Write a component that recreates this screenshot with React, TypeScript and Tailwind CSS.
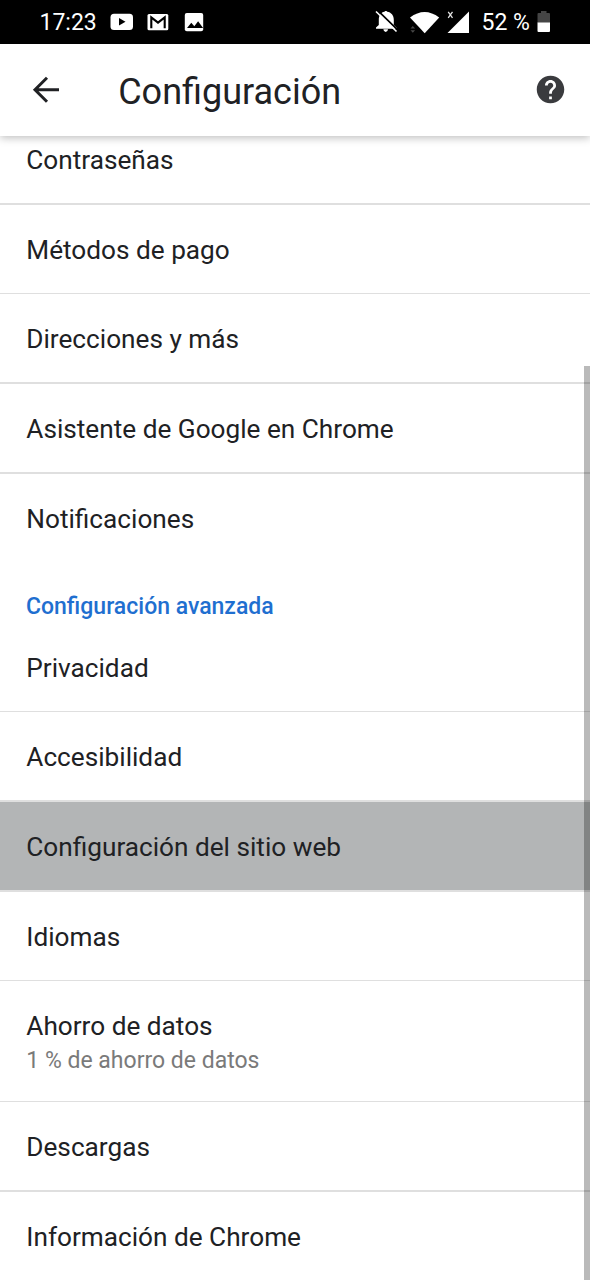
import React from "react";

type RowProps = {
  label: string;
  detail?: string;
  pressed?: boolean;
  divider?: boolean;
  height?: string;
};

function Row({ label, detail, pressed, divider = true, height = "h-[89.7px]" }: RowProps) {
  return (
    <li className={`flex shrink-0 flex-col ${height}`}>
      <div
        className={`flex flex-1 flex-col justify-center pl-[26.3px] ${detail ? "pt-[5px]" : "pt-[3px]"} ${pressed ? "bg-[#b3b5b6]" : ""}`}
      >
        <span className="text-[26.2px] leading-[31px] text-[#202124]">{label}</span>
        {detail && (
          <span className="pt-[4px] text-[23px] leading-[30px] text-[#7a7a7a]">{detail}</span>
        )}
      </div>
      <div className={`h-[1.65px] ${divider ? "bg-[#dfdfdf]" : ""}`} />
    </li>
  );
}

function StatusBar() {
  return (
    <div className="flex h-11 shrink-0 items-center bg-black text-[23px] text-white">
      <span className="ml-[39.5px] w-[70.5px] pt-[2px] leading-[44px]">17:23</span>
      <svg className="h-[44px] w-[100px]" viewBox="110 0 100 44" fill="#fff">
        <rect x="110.5" y="13.8" width="22.5" height="16.2" rx="3.5" />
        <path d="M119 18v7.6l6.5-3.8z" fill="#000" />
        <rect x="147.5" y="14" width="20.8" height="16.2" rx="1.5" />
        <path d="M151.3 28.2V17.5l6.7 5.2 6.7-5.2v10.7" fill="none" stroke="#000" strokeWidth="2.1" />
        <rect x="184.8" y="13" width="18.4" height="18.3" rx="2" />
        <path d="M187 28l4.3-5.3 3 3.5 3.8-5 5 6.8z" fill="#000" />
      </svg>
      <svg className="ml-[150px] h-[44px] w-[120px]" viewBox="360 0 120 44" fill="#fff">
        <path d="M378.800 20C378.800 15.500 381 12.300 384.500 11.800C384.500 10.800 387.200 10.800 387.200 11.800C391.200 12.300 393.800 15.500 393.800 20V25L396.500 27.500V28.700H376V27.500L378.800 25Z" />
        <path d="M383.300 29.300h4.800q-.5 2.700-2.400 2.700t-2.400-2.700z" />
        <path d="M377.600 10.300l20 19.600" stroke="#000" strokeWidth="1.800" />
        <path d="M376 11.500l20.500 20" stroke="#fff" strokeWidth="1.600" />
        <path d="M410 17.500q14.600-11 29.200 0L424.700 33.300z" />
        <path d="M410.500 28.500l2.300-2.500 2.300 2.500zM410.500 30.300l2.300 2.500 2.300-2.500z" fill="#484848" />
        <path d="M469 11.500V33H447.500z" />
        <path d="M448.200 11.800l4.300 6M452.500 11.800l-4.300 6" stroke="#e5e5e5" strokeWidth="1.300" />
      </svg>
      <span className="ml-[1.5px] w-[55.5px] whitespace-nowrap pt-[2px] leading-[44px]">52 %</span>
      <svg className="h-[44px] w-[14px]" viewBox="537 0 14 44">
        <path d="M537.500 14q0-1 1-1h2.500v-2h5.500v2h2.500q1 0 1 1v9h-12.500z" fill="#454545" />
        <path d="M537.500 22.500H550V31q0 1-1 1h-10.500q-1 0-1-1z" fill="#fff" />
      </svg>
    </div>
  );
}

function Toolbar() {
  return (
    <header className="z-10 flex h-[92px] shrink-0 items-center bg-white shadow-[0_2px_8px_rgba(0,0,0,0.25)]">
      <svg className="ml-[26px] h-[40px] w-[40px]" viewBox="26 70 40 40" fill="none" stroke="#202124" strokeWidth="3">
        <path d="M59 89.700H35M47 77.700L35 89.700l12 12" />
      </svg>
      <h1 className="ml-[52.2px] flex-1 pt-[4px] text-[36px] leading-[44px] text-[#202124]">Configuración</h1>
      <svg className="mb-[2px] mr-[23px] h-[33px] w-[33px]" viewBox="0 0 24 24" fill="#3a3b3e">
        <path d="M12 2C6.480 2 2 6.480 2 12s4.480 10 10 10 10-4.480 10-10S17.520 2 12 2zm1 17h-2v-2h2v2zm2.070-7.750l-.9.920C13.450 12.900 13 13.500 13 15h-2v-.5c0-1.100.45-2.100 1.170-2.830l1.240-1.260c.37-.36.59-.86.59-1.410 0-1.100-.9-2-2-2s-2 .9-2 2H8c0-2.210 1.790-4 4-4s4 1.790 4 4c0 .88-.36 1.680-.93 2.250z" />
      </svg>
    </header>
  );
}

export default function App() {
  return (
    <div className="relative flex h-[1280px] w-[590px] flex-col overflow-hidden bg-white font-['Roboto',sans-serif]">
      <StatusBar />
      <Toolbar />
      <main className="-mt-[21px] flex flex-1 flex-col overflow-hidden">
        <ul className="flex flex-col">
          <Row label="Contraseñas" />
          <Row label="Métodos de pago" />
          <Row label="Direcciones y más" />
          <Row label="Asistente de Google en Chrome" />
          <Row label="Notificaciones" divider={false} />
        </ul>
        <h2 className="flex h-[59.1px] shrink-0 items-end pb-[0.5px] pl-[26px] text-[23px] font-medium leading-[30px] text-[#1f6fd0]">
          Configuración avanzada
        </h2>
        <ul className="flex flex-col">
          <Row label="Privacidad" />
          <Row label="Accesibilidad" />
          <Row label="Configuración del sitio web" pressed />
          <Row label="Idiomas" />
          <Row label="Ahorro de datos" detail="1 % de ahorro de datos" height="h-[120.9px]" />
          <Row label="Descargas" />
          <Row label="Información de Chrome" divider={false} />
        </ul>
      </main>
      <div className="absolute right-0 top-[366px] z-20 h-[914px] w-[6px] bg-black/27" />
    </div>
  );
}
